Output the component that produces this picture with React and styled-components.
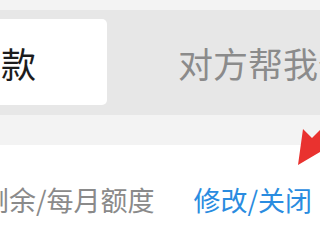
import React from 'react'
import styled, { createGlobalStyle } from 'styled-components'

const GlobalStyle = createGlobalStyle`
    body {
        margin: 0;
        background: #ffffff;
        font-family: "Noto Sans CJK SC", "Noto Sans", sans-serif;
    }
`

const Page = styled.div`
    position: relative;
    width: 320px;
    height: 240px;
    overflow: hidden;
    background: #ffffff;
`

const Header = styled.div`
    background: #f3f3f3;
    padding: 10px 0 30px;
`

const Segmented = styled.div`
    display: flex;
    width: max-content;
    margin-left: -254px;
    padding: 9px 9px 10px;
    background: #e7e7e7;
`

const Tab = styled.div`
    width: 352px;
    height: 86px;
    display: flex;
    align-items: center;
    justify-content: center;
    font-size: 35px;
    color: ${props => props.active ? '#1c1c1c' : '#8b8b8b'};
    background: ${props => props.active ? '#ffffff' : 'transparent'};
    border-radius: 5px;
`

const Row = styled.div`
    display: flex;
    justify-content: space-between;
    align-items: center;
    padding: 36px 8px 0 0;
    line-height: 38px;
    font-size: 27px;
    white-space: nowrap;
`

const Label = styled.span`
    flex: none;
    margin-left: -18px;
    color: #8a8a8a;
`

const Action = styled.span`
    flex: none;
    color: #2a8ce0;
`

const Arrow = styled.svg`
    position: absolute;
    left: 288px;
    top: 122px;
`

const RedArrow = () => (
    <Arrow width="32" height="46" viewBox="0 0 32 46">
        <polygon points="10,43 15,7 24,16 32,8 32,30" fill="#e9322f"/>
    </Arrow>
)

const App = () => {
    return (
        <Page>
            <GlobalStyle/>
            <Header>
                <Segmented>
                    <Tab active>我帮对方付款</Tab>
                    <Tab>对方帮我付款</Tab>
                </Segmented>
            </Header>
            <Row>
                <Label>剩余/每月额度</Label>
                <Action>修改/关闭</Action>
            </Row>
            <RedArrow/>
        </Page>
    )
}

export default App
